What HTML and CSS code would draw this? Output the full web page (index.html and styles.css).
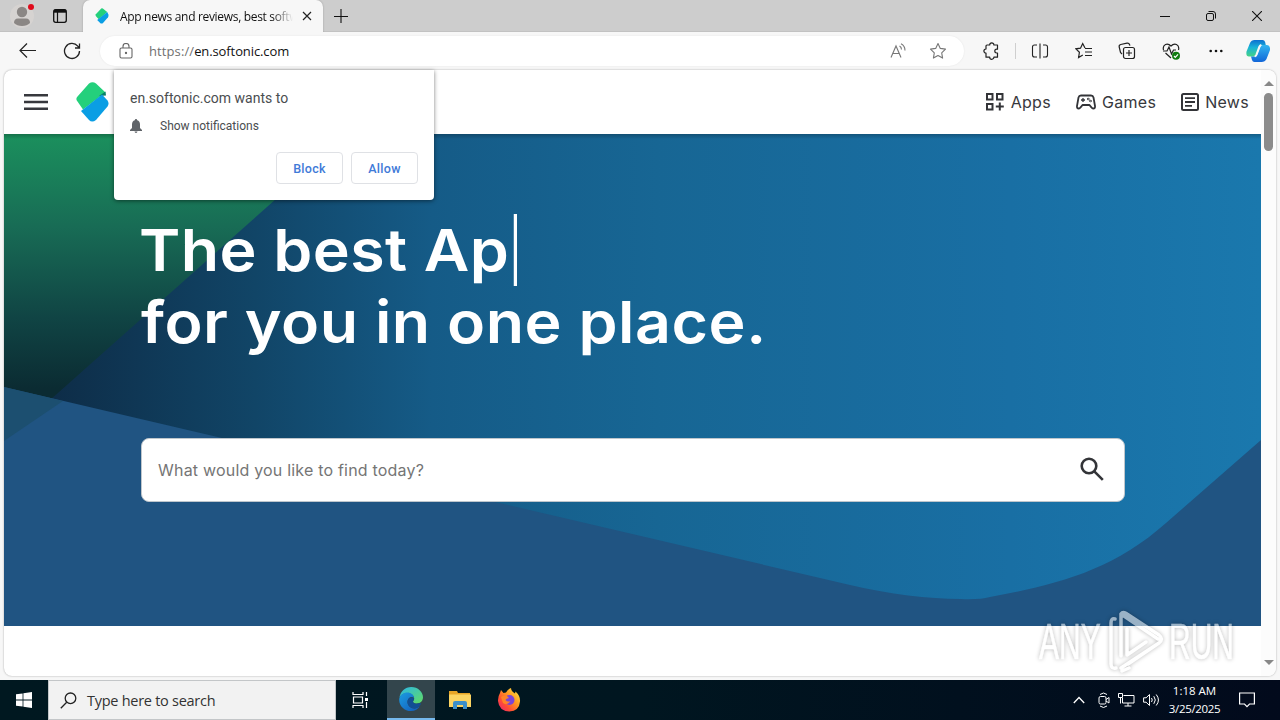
FILE: index.html
```html
<!DOCTYPE html>
<html lang="en">
<head>
  <meta charset="UTF-8" />
  <title>App news and reviews, best software downloads</title>
  <link rel="stylesheet" href="styles.css">
</head>
<body>
  <div class="titlebar">
    <svg class="avatar" width="26" height="26" viewBox="0 0 26 26">
      <circle cx="13" cy="13" r="12" fill="#d6d3d1"/>
      <circle cx="13" cy="9" r="5.2" fill="#8b8785"/>
      <path d="M5 20q0-4.5 4-4.5h8q4 0 4 4.500q-3 3-8 3t-8-3z" fill="#8b8785"/>
      <circle cx="22" cy="4" r="3" fill="#e00b1c"/>
    </svg>
    <svg class="workspace" width="16" height="16" viewBox="0 0 16 16" fill="none" stroke="#111">
      <rect x="1.7" y="1.700" width="12.600" height="12.600" rx="2" stroke-width="1.3"/>
      <path d="M2 3.200h12" stroke-width="3"/>
      <path d="M5.500 4v10" stroke-width="1.200"/>
    </svg>
    <div class="tab">
      <svg width="14" height="16" viewBox="0 0 34 40">
        <path d="M1 16Q0 19 3 22l6 6L30 10 19 1q-2-1-4 0z" fill="#24d07c"/>
        <path d="M30 10l3 6q1 4-1 7L19 38q-3 2-6 0L5 30z" fill="#0a9ee4"/>
      </svg>
      <span class="tab-title">App news and reviews, best softw</span>
      <svg class="tab-close" width="10" height="10" viewBox="0 0 10 10" stroke="#222" stroke-width="1.200"><path d="M1 1l8 8M9 1L1 9"/></svg>
    </div>
    <svg class="new-tab" width="14" height="14" viewBox="0 0 14 14" stroke="#111" stroke-width="1.100"><path d="M7 0v14M0 7.500h14"/></svg>
    <div class="window-buttons">
      <svg width="10" height="10" viewBox="0 0 10 10" stroke="#111"><path d="M0 5.500h10"/></svg>
      <svg width="10" height="10" viewBox="0 0 10 10" fill="none" stroke="#111"><rect x=".5" y="2.500" width="7" height="7" rx="1.500"/><path d="M2.500 .5H7q2.500 0 2.500 2.500v4.500"/></svg>
      <svg width="10" height="10" viewBox="0 0 10 10" stroke="#111" stroke-width="1.100"><path d="M0 0l10 10M10 0L0 10"/></svg>
    </div>
  </div>

  <div class="toolbar">
    <svg class="back" width="18" height="16" viewBox="0 0 18 16" fill="none" stroke="#222" stroke-width="1.200"><path d="M17 7.500H1.500M8 .5L1 7.500l7 7"/></svg>
    <svg class="reload" width="18" height="18" viewBox="0 0 18 18" fill="none" stroke="#222" stroke-width="1.300"><path d="M16.500 9A7.500 7.500 0 1 1 14.800 4.200L16 5.800M16.500 1.500V6H12"/></svg>
    <div class="address">
      <svg width="14" height="16" viewBox="0 0 14 16" fill="none" stroke="#666" stroke-width="1.100"><rect x="1" y="5" width="12" height="10" rx="1.500"/><path d="M4 5V3.500a3 3 0 0 1 6 0V5"/><circle cx="7" cy="10" r=".6" fill="#555"/></svg>
      <span class="url"><span class="scheme">https://</span>en.softonic.com</span>
      <svg class="read" width="17" height="16" viewBox="0 0 17 16" fill="none" stroke="#777" stroke-width="1.100"><path d="M1 14.500L6 3l5 11.500M3 10.500h6.200M9.500 3q2 1 2 3.500M11 .8q4 2 4 6.700"/></svg>
      <svg width="18" height="18" viewBox="0 0 18 18" fill="none" stroke="#777" stroke-width="1.100" stroke-linejoin="round"><path d="M9 1.500l2.300 4.900 5.200.7-3.800 3.700.9 5.300L9 13.500l-4.600 2.600.9-5.300L1.500 7.100l5.200-.7z"/></svg>
    </div>
    <div class="tools">
      <svg width="18" height="18" viewBox="0 0 18 18" fill="none" stroke="#222" stroke-width="1.200" stroke-linejoin="round"><path d="M5 3h2.700a2.100 2.100 0 0 1 4.200 0H15.500v4.200h-.8a1.900 1.900 0 0 0 0 3.800h.8v4.200h-3.600a2.100 2.100 0 0 1-4.200 0H4v-4a2.100 2.100 0 0 1 0-4.200V4q0-1 1-1z"/></svg>
      <span class="divider"></span>
      <svg width="18" height="16" viewBox="0 0 18 16" fill="none" stroke="#222" stroke-width="1.100"><path d="M6 2H3.500Q1.500 2 1.500 4v8q0 2 2 2H6M12 2h2.500q2 0 2 2v8q0 2-2 2H12M9 .5v15"/></svg>
      <svg width="18" height="18" viewBox="0 0 18 18" fill="none" stroke="#222" stroke-width="1.200"><path d="M10 6L7.700 1.500 5.500 6.200 1 6.800l3.400 3.500-.8 5.200 4.200-2.500M10 6.500h7M10 10h7M10 13.500h7"/></svg>
      <svg width="18" height="18" viewBox="0 0 18 18" fill="none" stroke="#222" stroke-width="1.200"><rect x="5.500" y="5.500" width="11" height="11" rx="2"/><path d="M11 8v6M8 11h6M4 12L2.500 10.500 1.200 5q-.4-2 1.500-2.500L9 1.200q2-.3 2.600 1.500l.3 1"/></svg>
      <svg width="18" height="18" viewBox="0 0 18 18" fill="none" stroke="#222" stroke-width="1.200"><path d="M1.500 8Q.5 4 3.500 2.500 6.500 1.500 9 4q2.500-2.500 5.500-1.500Q17.500 4 16.500 8M1 9h4l2-4 2.500 7L11.500 8H14M3.500 11L9 16"/><circle cx="14" cy="13.700" r="4" fill="#107c10" stroke="none"/><path d="M12 14l1.300 1.300 2.700-3" stroke="#fff"/></svg>
      <svg class="more" width="14" height="4" viewBox="0 0 14 4" fill="#111"><circle cx="1.700" cy="2" r="1.300"/><circle cx="7" cy="2" r="1.300"/><circle cx="12.300" cy="2" r="1.300"/></svg>
      <svg class="copilot" width="24" height="24" viewBox="0 0 24 24">
        <defs>
          <linearGradient id="cpA" x2="0" y2="1"><stop offset="0" stop-color="#0d6fd0"/><stop offset=".45" stop-color="#19b3d8"/><stop offset="1" stop-color="#45d385"/></linearGradient>
          <linearGradient id="cpB" x2="0" y2="1"><stop offset="0" stop-color="#33b5f0"/><stop offset="1" stop-color="#1266d8"/></linearGradient>
        </defs>
        <path d="M8.500 1h8q2 0 2.600 2l.7 3h-4q-2 0-2.700 2l-3 7.500q-.7 2-2.600 2H3Q-.3 17.500.5 12.500L4 4Q5.300 1 8.500 1z" fill="url(#cpA)"/>
        <path d="M15.500 23H8.500Q6.500 23 6 21l-1-3.500h3.500q2 0 2.700-2l3-7.500q.7-2 2.600-2H21q3.500.3 3 5l-3.500 9Q19 23 15.500 23z" fill="url(#cpB)"/>
        <path d="M13.200 7.500q.6-1.500 2-1.500-1 .5-1.600 2l-2.800 7.500q-.6 1.700-2 2 .9-.6 1.500-2z" fill="#f7f7f7" stroke="#f7f7f7" stroke-width="1.600"/>
      </svg>
    </div>
  </div>

  <div class="viewport">
    <div class="page">
      <header class="site-header">
        <svg class="menu" width="24" height="16" viewBox="0 0 24 16" fill="#37383d"><path d="M0 0h24v2.600H0zM0 6.700h24v2.600H0zM0 13.400h24V16H0z"/></svg>
        <svg class="logo" width="34" height="40" viewBox="0 0 34 40">
          <path d="M1.500 14.500Q-.8 17 1.500 19.500l5.500 8L29.500 10.500 20 1.500q-3.500-2.500-7 0z" fill="#24d07c"/>
          <path d="M23 14l6.500-4.500.5 4z" fill="#087f67"/>
          <path d="M26 12.500l5.500 6q2 3 0 6L20 38q-4 3-7 0l-8-9z" fill="#0a9ee4"/>
        </svg>
        <nav class="site-nav">
          <a><svg width="20" height="20" viewBox="0 0 20 20" fill="none" stroke="#333438" stroke-width="2"><path d="M2 2h5.500v5.500H2zM12 2h5.500v5.500H12zM2 12h5.500v5.500H2zM14.800 10.500v8M10.800 14.500h8"/></svg><span>Apps</span></a>
          <a><svg width="20" height="16" viewBox="0 0 20 16" fill="none" stroke="#333438" stroke-width="1.800" stroke-linejoin="round"><path d="M5 1.500h10q2 0 2.500 2L19 12q.3 2.500-1.700 2.500Q16 14.500 13.500 11h-7Q4 14.500 2.700 14.500.7 14.500 1 12l1.500-8.500q.5-2 2.500-2z"/><path d="M7 4v4M5 6h4" stroke-width="1.300"/><circle cx="12.300" cy="5" r=".4"/><circle cx="14.500" cy="7" r=".4"/></svg><span>Games</span></a>
          <a><svg width="18" height="18" viewBox="0 0 18 18" fill="none" stroke="#333438" stroke-width="2"><rect x="1" y="1" width="16" height="16" rx="1.500"/><path d="M4 5.200h10M4 9h10M4 12.800h7" stroke-width="1.800"/></svg><span>News</span></a>
        </nav>
      </header>

      <section class="hero">
        <svg class="hero-bg" width="1257" height="492" viewBox="0 0 1257 492">
          <defs>
            <linearGradient id="blue">
              <stop offset="0" stop-color="#0c2741"/>
              <stop offset=".06" stop-color="#0e304c"/>
              <stop offset=".2" stop-color="#114567"/>
              <stop offset=".34" stop-color="#155b87"/>
              <stop offset=".52" stop-color="#176694"/>
              <stop offset=".8" stop-color="#196fa4"/>
              <stop offset="1" stop-color="#1a78ad"/>
            </linearGradient>
            <linearGradient id="green" gradientUnits="userSpaceOnUse" x1="0" y1="0" x2="0" y2="307">
              <stop offset="0" stop-color="#1b905d"/>
              <stop offset=".3" stop-color="#186c55"/>
              <stop offset=".6" stop-color="#104444"/>
              <stop offset=".83" stop-color="#0b2b32"/>
              <stop offset="1" stop-color="#0b2b32"/>
            </linearGradient>
            <linearGradient id="shade" x2="0" y2="1">
              <stop offset="0" stop-color="#000" stop-opacity=".22"/>
              <stop offset="1" stop-color="#000" stop-opacity="0"/>
            </linearGradient>
          </defs>
          <rect width="1257" height="492" fill="url(#blue)"/>
          <path d="M0 0h345L0 307z" fill="url(#green)"/>
          <path d="M0 253L846 451C885 460 925 465 956 465Q975 466 986 463C1050 451 1107 438 1162 389L1257 306V492H0z" fill="#205482"/>
          <path d="M0 253L59 267 0 307z" fill="#1c4d6b" opacity=".8"/>
          <rect width="1257" height="5" fill="url(#shade)"/>
        </svg>
        <div class="hero-content">
          <h1><span class="line-one">The best Ap<i class="caret"></i></span><span class="line-two">for you in one place.</span></h1>
          <div class="search">
            <span>What would you like to find today?</span>
            <svg width="24" height="24" viewBox="0 0 24 24" fill="none" stroke="#333438" stroke-width="2.600"><circle cx="9" cy="9" r="7.300"/><path d="M14.300 14.300l8.500 8.500"/></svg>
          </div>
        </div>
      </section>
    </div>
    <div class="scrollbar">
      <svg width="10" height="6" viewBox="0 0 10 6"><path d="M0 6l5-5 5 5z" fill="#888"/></svg>
      <span class="thumb"></span>
      <svg width="10" height="6" viewBox="0 0 10 6"><path d="M0 0l5 5 5-5z" fill="#888"/></svg>
    </div>
  </div>

  <div class="permission">
    <p class="origin">en.softonic.com wants to</p>
    <p class="request">
      <svg width="12" height="14" viewBox="0 0 12 14" fill="#5f6368"><path d="M6 0q1.200 0 1.200 1.300Q10 2.200 10 5.500V9l2 2v1H0v-1l2-2V5.500q0-3.300 2.800-4.200Q4.800 0 6 0zM4.500 12.600h3Q7.300 14 6 14t-1.500-1.400z"/></svg>
      <span>Show notifications</span>
    </p>
    <div class="actions">
      <button type="button">Block</button>
      <button type="button">Allow</button>
    </div>
  </div>

  <div class="watermark">
    <span>ANY</span>
    <svg width="58" height="64" viewBox="0 0 58 64" fill="none" stroke="#fff" stroke-width="3.500" stroke-linejoin="round" stroke-linecap="round">
      <path d="M7 9q-4-1-4 4v41q0 5 5 4M13 46V4q2-3 6 0l32 21q5 4 0 8L20 54M13 4L50 29M13 18v28M19 19v26l19-13M13 58l38-25M14 61l7-3"/>
    </svg>
    <span>RUN</span>
  </div>

  <div class="taskbar">
    <div class="start"><svg width="16" height="16" viewBox="0 0 16 16" fill="#fff"><path d="M0 2.300l6.600-.9v6.100H0zM7.400 1.200L16 0v7.500H7.400zM0 8.400h6.600v6.200L0 13.700zM7.400 8.400H16V16l-8.600-1.200z"/></svg></div>
    <div class="task-search">
      <svg width="17" height="17" viewBox="0 0 17 17" fill="none" stroke="#222" stroke-width="1.300"><circle cx="10.500" cy="6.300" r="5.300"/><path d="M6.700 10.200L.8 16.200"/></svg>
      <span>Type here to search</span>
    </div>
    <div class="task-item"><svg width="17" height="16" viewBox="0 0 17 16" fill="none" stroke="#fff" stroke-width="1.200"><path d="M1 0v2.500h10V0M1 16v-2.500h10V16M1.500 5h9v6h-9zM14.500 0v4M14.500 10v6"/><path d="M13 6h3v3h-3z" fill="#fff" stroke="none"/></svg></div>
    <div class="task-item active">
      <svg width="24" height="24" viewBox="0 0 24 24">
        <defs>
          <linearGradient id="edA" y2="1"><stop offset="0" stop-color="#2bb6e8"/><stop offset="1" stop-color="#62dc61"/></linearGradient>
          <linearGradient id="edB" y2="1"><stop offset="0" stop-color="#1b9de2"/><stop offset="1" stop-color="#1358b8"/></linearGradient>
        </defs>
        <path d="M.5 10.500C1.500 4.500 6 0 12.300 0 19 0 24 5 24 10.300c0 3.800-2.800 6.200-6 6.200-2.500 0-4-.9-4-1.800 0-.8 1.200-1.200 1.200-3.200C15.200 8.500 12 6 8.300 6 4.500 6 1.800 8 .5 10.500z" fill="url(#edA)"/>
        <path d="M.3 11.500C1.200 8 4.500 5.500 8.300 5.500c3.700 0 6.500 2.300 6.800 5.200C12 8.500 8.500 11 8.500 15c0 4 4 7.200 8 6.200 2-.4 3.500-1.300 4.700-2.200C19 22 16 24 12 24 5 24-.6 18 .3 11.500z" fill="url(#edB)"/>
        <path d="M8.500 15c0-3 1.500-4.800 4.500-4.600 1 .1 2 .6 2 1.600 0 1.400-1.200 1.700-1 2.700.3 1.500 2.500 2.300 5 1.800 1.500-.3 2.600-.4 3 .3-1 2.500-3 4.200-5.500 4.600-4.500.6-8-2.500-8-6.400z" fill="#124f94"/>
      </svg>
    </div>
    <div class="task-item"><svg width="22" height="20" viewBox="0 0 22 20"><path d="M0 1h8l1 2h12v14H0z" fill="#e8a526"/><path d="M0 4.500h22V17H0z" fill="#fcd462"/><path d="M4 19v-6q0-2 2-2h10q2 0 2 2v6h-4v-4H8v4z" fill="#3b8fcb"/></svg></div>
    <div class="task-item"><svg width="24" height="24" viewBox="0 0 24 24">
      <defs><linearGradient id="ff" x1="1" x2="0" y2="1"><stop offset="0" stop-color="#fff04a"/><stop offset=".4" stop-color="#ff9a20"/><stop offset=".7" stop-color="#ff4b35"/><stop offset="1" stop-color="#e5207c"/></linearGradient></defs>
      <path d="M3 5l1-3 2.500 3L9 4.500Q11 1 14 0q0 3 4 5.500l.5-2Q23.500 8 23 13.500 22.300 23 12.300 23.500 2 23 1 13 .8 8.500 3 5z" fill="url(#ff)"/>
      <circle cx="12.500" cy="12" r="5" fill="#7a45d8"/>
      <path d="M4 9q3-2 6-1l2 2q-3 .5-3.500 2 2 2.500 5 1Q10 18 6 15z" fill="#ff8427"/>
    </svg></div>
    <div class="tray">
      <svg width="12" height="8" viewBox="0 0 12 8" fill="none" stroke="#fff" stroke-width="1.300"><path d="M.8 7L6 1.500 11.200 7"/></svg>
      <svg width="12" height="16" viewBox="0 0 12 16" fill="none" stroke="#fff"><rect x="1" y="4.500" width="7" height="7.500" rx="1.500"/><path d="M8 7.500l3-2v5.500l-3-2M2 2.500q3.500-3 7 0M2 14q3.500 3 7 0"/></svg>
      <svg width="17" height="14" viewBox="0 0 17 14" fill="none" stroke="#fff"><path d="M5.500 2.500h10.500v7.500H4.500V5M10 10v3M6.500 13h7M.5 .5h4v4h-4zM2.500 4.500v6"/></svg>
      <svg width="17" height="14" viewBox="0 0 17 14" fill="none" stroke="#fff"><path d="M.6 4.800h2.500L6.500 1.500v11L3.100 9.200H.6zM8.500 5q1.500 2 0 4M10.800 3.200q3 3.800 0 7.600M13.200 1.500q4.500 5.500 0 11"/></svg>
      <div class="clock"><span class="time">1:18 AM</span><span>3/25/2025</span></div>
      <svg class="action-center" width="16" height="16" viewBox="0 0 16 16" fill="none" stroke="#fff" stroke-width="1.200"><path d="M.6 1h14.800v11h-4.900l-2.500 2.600L5.500 12H.6z"/></svg>
    </div>
  </div>
</body>
</html>
```

FILE: styles.css
```css
* {
  box-sizing: border-box;
}

body {
  margin: 0;
  width: 1280px;
  height: 720px;
  overflow: hidden;
  position: relative;
  display: flex;
  flex-direction: column;
  background: #f7f7f7;
  font-family: "Open Sans", sans-serif;
}

svg {
  display: block;
  flex: none;
}

.titlebar {
  height: 32px;
  flex: none;
  display: flex;
  align-items: center;
  background: #cdcdcd;
  border-bottom: 1px solid #c2c2c2;
}

.avatar {
  margin-left: 9px;
}

.workspace {
  margin-left: 17px;
}

.tab {
  width: 240px;
  height: 32px;
  margin: 0 0 -1px 15px;
  padding-left: 12px;
  display: flex;
  align-items: center;
  background: #f7f7f7;
  border-radius: 7px 7px 0 0;
  box-shadow: 0 0 2px rgba(0, 0, 0, .25);
  clip-path: inset(0 -2px 0 -2px);
}

.tab-title {
  width: 173px;
  margin-left: 11px;
  white-space: nowrap;
  font-size: 12px;
  letter-spacing: -.32px;
  color: #111;
  -webkit-mask-image: linear-gradient(90deg, #000 88%, transparent);
  mask-image: linear-gradient(90deg, #000 88%, transparent);
}

.tab-close {
  margin-left: 9px;
}

.new-tab {
  margin-left: 11px;
}

.window-buttons {
  margin: 0 18px 0 auto;
  display: flex;
  gap: 36px;
}

.toolbar {
  height: 38px;
  flex: none;
  display: flex;
  align-items: center;
  background: #f7f7f7;
}

.back {
  margin-left: 19px;
}

.reload {
  margin-left: 26px;
}

.address {
  width: 864px;
  height: 30px;
  margin-left: 19px;
  padding: 0 17px 0 19px;
  display: flex;
  align-items: center;
  background: #fff;
  border-radius: 15px;
  box-shadow: 0 0 2px rgba(0, 0, 0, .08);
}

.url {
  margin-left: 16px;
  font-size: 13px;
  letter-spacing: -.1px;
  color: #111;
}

.scheme {
  letter-spacing: .1px;
  color: #707070;
}

.read {
  margin: 0 22px 0 auto;
}

.tools {
  flex: 1;
  margin: 0 10px 0 18px;
  display: flex;
  align-items: center;
  justify-content: space-between;
}

.divider {
  width: 1px;
  height: 16px;
  margin: 0 -11px;
  background: #cfcfcf;
}

.more {
  margin: 0 -3px 0 3px;
}

.viewport {
  width: 1272px;
  height: 606px;
  margin: 0 4px 4px;
  flex: none;
  display: flex;
  overflow: hidden;
  background: #fff;
  border-radius: 8px;
  box-shadow: 0 0 2px rgba(0, 0, 0, .35);
}

.page {
  width: 1257px;
}

.site-header {
  height: 64px;
  padding: 0 12px 0 20px;
  display: flex;
  align-items: center;
}

.logo {
  margin-left: 28px;
}

.site-nav {
  margin-left: auto;
  display: flex;
  gap: 25px;
  font: 16px Inter, sans-serif;
  letter-spacing: .3px;
  color: #37383d;
}

.site-nav a {
  display: flex;
  align-items: center;
  gap: 6px;
}

.hero {
  height: 492px;
  position: relative;
}

.hero-bg {
  position: absolute;
}

.hero-content {
  position: relative;
  width: 984px;
  margin-left: 137px;
  padding-top: 80px;
}

h1 {
  height: 224px;
  margin: 0;
  color: #fff;
  font: 600 58px/72px Inter, sans-serif;
}

h1 span {
  display: flex;
  white-space: pre;
  transform: scaleX(1.08);
  transform-origin: left;
}

.line-one {
  margin-left: -2px;
  letter-spacing: .4px;
}

.line-two {
  letter-spacing: .5px;
}

.caret {
  width: 3px;
  height: 72px;
  margin-left: 4px;
  background: #fff;
}

.search {
  height: 64px;
  padding: 0 20px 2px 16px;
  display: flex;
  align-items: center;
  justify-content: space-between;
  background: #fff;
  border: 1px solid #bfc6cc;
  border-radius: 8px;
  font: 16px Inter, sans-serif;
  letter-spacing: .2px;
  color: #757575;
}

.search span {
  padding-top: 2px;
}

.scrollbar {
  width: 15px;
  padding: 10px 0;
  display: flex;
  flex-direction: column;
  align-items: center;
  background: #fcfcfc;
}

.thumb {
  width: 9px;
  height: 58px;
  margin: 7px 0 auto;
  border-radius: 5px;
  background: #8b8b8b;
}

.permission {
  position: absolute;
  left: 114px;
  top: 70px;
  width: 320px;
  height: 130px;
  padding: 19px 16px 16px;
  background: #fff;
  border-radius: 0 0 4px 4px;
  box-shadow: 0 1px 4px rgba(0, 0, 0, .5);
  font-family: Roboto, sans-serif;
  color: #4a4d50;
}

.permission p {
  margin: 0;
}

.origin {
  font-size: 14px;
  line-height: 19px;
}

.request {
  height: 36px;
  display: flex;
  align-items: center;
  gap: 18px;
  font-size: 12px;
}

.actions {
  margin-top: 8px;
  display: flex;
  justify-content: flex-end;
  gap: 8px;
}

.actions button {
  width: 67px;
  height: 32px;
  padding: 0;
  background: #fff;
  border: 1px solid #dfe1e5;
  border-radius: 4px;
  font: 500 12.500px Roboto, sans-serif;
  letter-spacing: .3px;
  color: #3f7ad8;
}

.watermark {
  position: absolute;
  left: 1039px;
  top: 609px;
  display: flex;
  align-items: center;
  opacity: .55;
  font: 50px/66px "Liberation Sans", sans-serif;
  color: #fff;
  filter: drop-shadow(0 0 2px rgba(0, 0, 0, .5));
}

.watermark svg {
  margin: 0 3px 0 5px;
}

.watermark span {
  width: 64px;
  transform: scaleX(.6);
  transform-origin: left;
  -webkit-text-stroke: .6px #fff;
}

.taskbar {
  height: 40px;
  flex: none;
  display: flex;
  background: linear-gradient(90deg, #001820, #001620 50%, #020a1c);
}

.start, .task-item {
  width: 48px;
  display: flex;
  align-items: center;
  justify-content: center;
}

.task-item {
  margin-right: 1px;
}

.task-search {
  width: 288px;
  padding-left: 11px;
  display: flex;
  align-items: center;
  background: #f2f2f2;
  border: 1px solid #c3c6c8;
  font-size: 14.500px;
  letter-spacing: -.27px;
  color: #333;
}

.task-search span {
  margin-left: 10px;
}

.active {
  background: #33454c;
  border-bottom: 2px solid #76b9ed;
  margin-left: 2px;
}

.tray {
  margin: 0 25px 0 auto;
  display: flex;
  align-items: center;
  gap: 8px;
}

.tray svg:first-child {
  margin-right: 5px;
}

.clock {
  width: 53px;
  display: flex;
  flex-direction: column;
  align-items: center;
  font-size: 11.500px;
  line-height: 18px;
  letter-spacing: -.35px;
  white-space: nowrap;
  color: #fff;
}

.time {
  letter-spacing: 0;
}

.action-center {
  margin-left: 10px;
}
```
